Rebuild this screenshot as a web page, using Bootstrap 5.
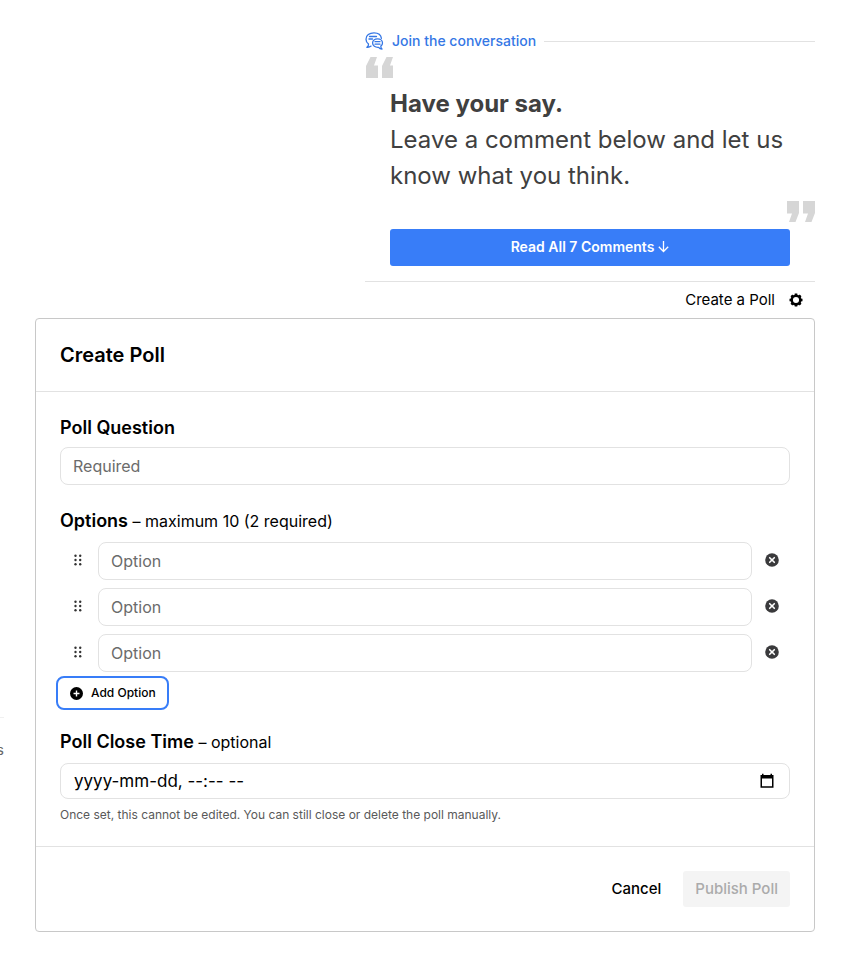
<!DOCTYPE html>
<html lang="en">
<head>
<meta charset="utf-8">
<meta name="viewport" content="width=device-width, initial-scale=1">
<title>Create Poll</title>
<link rel="stylesheet" href="https://cdn.jsdelivr.net/npm/bootstrap@5.3.0/dist/css/bootstrap.min.css">
<style>
body { font-family: Inter, "Liberation Sans", sans-serif; font-size: 16px; line-height: 24px; color: #000; background: #fff; }
svg { display: block; flex: none; }
.edge-col { width: 5px; margin-top: 717px; }
.edge-col p { border-top: 1px solid #f0f0f0; padding-top: 20px; margin-right: 1px; font-size: 14px; color: #666; }
.page-main { padding: 32px 31px 24px 30px; min-width: 0; }
.talk { width: 450px; max-width: 100%; }
.talk-link { font-size: 14px; line-height: 18px; font-weight: 500; color: #3577e5; }
.talk-rule { height: 1px; background: #e2e2e2; }
.talk-body { padding: 8px 25px 7px; font-size: 24px; line-height: 36px; color: #404040; }
.quote-mark { fill: #d6d6d6; }
.quote-open { margin-top: 7px; }
.btn-read { margin: 7px 25px 15px; padding: 7px 8px 9px; border: 0; border-radius: 3px; font-size: 14px; line-height: 21px; font-weight: 600; background: #387df8; color: #fff; }
.btn-read:hover { background: #2468e0; color: #fff; }
.poll-bar { border-top: 1px solid #e2e2e2; padding: 6px 12px 6px 0; }
.poll-bar .btn { font-size: 15px; line-height: 24px; gap: 14px; }
.btn:not(.btn-read) { color: #000; }
.poll-card { border: 1px solid #c8c8c8; border-radius: 4px; color: #000; }
.poll-head { padding: 24px; border-bottom: 1px solid #e2e2e2; }
.poll-head h1 { font-size: 20px; line-height: 24px; font-weight: 600; }
.poll-main { padding: 24px 24px 19px; }
.poll-label { font-size: 18px; line-height: 24px; font-weight: 600; margin: 0 0 9px; float: none; }
.poll-label.label-tight { margin-bottom: 7px; }
.poll-label span { font-size: 16px; font-weight: 400; }
.poll-input { height: 38px; padding: 6px 12px; border: 1px solid #e2e2e2; border-radius: 8px; font-size: 16px; line-height: 24px; color: #000; }
.poll-input::placeholder { color: #6b6b6b; }
.option-row { display: grid; grid-template-columns: 36px 1fr 36px; gap: 2px; margin-bottom: 8px; }
.option-row .btn { padding: 0 0 3px; border: 0; display: flex; align-items: center; justify-content: center; }
.btn-add { margin: -4px 0 20px -4px; height: 34px; padding: 0 11px 0 12px; border: 2px solid #387df8 !important; border-radius: 8px; font-size: 12px; line-height: 18px; font-weight: 500; }
.time-box { height: 36px; border: 1px solid #e2e2e2; border-radius: 8px; padding: 0 14px 0 13px; }
.time-box input { font-size: 17px; line-height: 24px; outline: 0; background: none; }
.time-box input::placeholder { color: #000; opacity: 1; }
.time-note { font-size: 12px; line-height: 18px; color: #595959; margin: 7px 0 3px; }
.poll-foot { border-top: 1px solid #e2e2e2; padding: 24px; gap: 10px; }
.poll-foot .btn { height: 36px; padding: 0 12px; border: 0; border-radius: 3px; font-size: 15px; line-height: 24px; font-weight: 500; }
.poll-foot .btn:disabled { background: #f4f4f4; color: #ababab; opacity: 1; }
</style>
<script src="https://cdn.jsdelivr.net/npm/bootstrap@5.3.0/dist/js/bootstrap.bundle.min.js"></script>
</head>
<body>
<svg width="0" height="0" class="d-none" aria-hidden="true">
  <symbol id="grip" viewBox="0 0 10 14"><g fill="#333"><circle cx="2.5" cy="2.800" r="1.2"/><circle cx="7.2" cy="2.800" r="1.2"/><circle cx="2.5" cy="7" r="1.2"/><circle cx="7.2" cy="7" r="1.2"/><circle cx="2.5" cy="11.200" r="1.2"/><circle cx="7.2" cy="11.200" r="1.2"/></g></symbol>
  <symbol id="cross" viewBox="0 0 14 14"><circle cx="7" cy="7" r="6.8" fill="#3a3a3c"/><path d="M4.7 4.7 9.3 9.3M9.3 4.7 4.7 9.3" stroke="#fff" stroke-width="1.6" stroke-linecap="round"/></symbol>
</svg>
<div class="d-flex align-items-start">
  <aside class="edge-col flex-shrink-0 overflow-hidden"><p class="mb-0 d-flex justify-content-end">s</p></aside>
  <main class="page-main flex-grow-1">
    <section class="talk ms-auto d-flex flex-column">
      <div class="d-flex align-items-center">
        <a href="#comments" class="talk-link d-flex align-items-center text-decoration-none gap-2 me-2">
          <svg width="19" height="18" viewBox="0 0 19 18" fill="none" stroke="#3577e5" stroke-width="1.300" stroke-linejoin="round" stroke-linecap="round" aria-hidden="true">
            <path d="M16.4 6.4C16 3 13 .9 9 .9 4.400.9 1 3.300 1 7.200c0 2 1 3.700 2.500 4.900.2 1.300-.5 2.400-1.600 3.200 1.700.2 3-.2 4.200-1.200"/>
            <path d="M12.500 6.800c2.800 0 5 1.700 5 4.100 0 1.500-.7 2.500-1.700 3.200-.1 1.200.3 2 1.200 2.900-1.400 0-2.600-.6-3.400-1.700-3.400.3-6-1.500-6-4.300 0-2.500 2.100-4.200 4.900-4.200Z"/>
            <path d="M4.500 4.500h7M4 7h3.500M10 9.700h5M10 12.200h5"/>
          </svg>
          <span>Join the conversation</span>
        </a>
        <div class="talk-rule flex-grow-1"></div>
      </div>
      <svg class="quote-mark quote-open" width="28" height="21" viewBox="0 0 28 21" aria-hidden="true"><path d="M1 21V9L5.500 0H12L9 8.500h4V21ZM17 21V9l4.500-9H28l-3 8.500h3V21Z"/></svg>
      <p class="talk-body mb-0"><strong class="d-block">Have your say.</strong>Leave a comment below and let us know what you think.</p>
      <svg class="quote-mark align-self-end" width="28" height="21" viewBox="0 0 28 21" aria-hidden="true"><path d="M12 0v12L8.500 21H2l3-8.500H0V0ZM28 0v12l-3.500 9H18l3-8.500h-5V0Z"/></svg>
      <button type="button" class="btn btn-read d-flex justify-content-center align-items-center gap-1">Read All 7 Comments
        <svg width="11" height="12" viewBox="0 0 11 12" fill="none" stroke="#fff" stroke-width="1.300" aria-hidden="true"><path d="M5.500 0v10M.8 5.800l4.700 4.700 4.700-4.700"/></svg>
      </button>
      <div class="poll-bar d-flex justify-content-end align-items-center">
        <button type="button" class="btn border-0 p-0 d-flex align-items-center">Create a Poll
          <svg width="14" height="14" viewBox="0 0 14 14" aria-hidden="true"><g fill="none" stroke="#000"><circle cx="7" cy="7" r="4.300" stroke-width="2.500"/><path stroke-width="2.600" d="M7 .5v2M7 11.500v2M.5 7h2M11.500 7h2M2.400 2.400l1.400 1.400M10.200 10.200l1.400 1.400M11.600 2.400l-1.400 1.400M3.800 10.200l-1.400 1.400"/></g></svg>
        </button>
      </div>
    </section>
    <form class="poll-card">
      <header class="poll-head"><h1 class="mb-0">Create Poll</h1></header>
      <div class="poll-main">
        <label class="poll-label label-tight d-block" for="question">Poll Question</label>
        <input class="form-control poll-input mb-4" id="question" type="text" placeholder="Required">
        <fieldset>
          <legend class="poll-label">Options <span>– maximum 10 (2 required)</span></legend>
          <div class="option-row">
            <button type="button" class="btn" aria-label="Move option 1"><svg width="10" height="14"><use href="#grip"/></svg></button>
            <input class="form-control poll-input" type="text" placeholder="Option" aria-label="Option 1">
            <button type="button" class="btn" aria-label="Remove option 1"><svg width="14" height="14"><use href="#cross"/></svg></button>
          </div>
          <div class="option-row">
            <button type="button" class="btn" aria-label="Move option 2"><svg width="10" height="14"><use href="#grip"/></svg></button>
            <input class="form-control poll-input" type="text" placeholder="Option" aria-label="Option 2">
            <button type="button" class="btn" aria-label="Remove option 2"><svg width="14" height="14"><use href="#cross"/></svg></button>
          </div>
          <div class="option-row">
            <button type="button" class="btn" aria-label="Move option 3"><svg width="10" height="14"><use href="#grip"/></svg></button>
            <input class="form-control poll-input" type="text" placeholder="Option" aria-label="Option 3">
            <button type="button" class="btn" aria-label="Remove option 3"><svg width="14" height="14"><use href="#cross"/></svg></button>
          </div>
          <button type="button" class="btn btn-add d-flex align-items-center gap-2">
            <svg width="13" height="13" viewBox="0 0 14 14" aria-hidden="true"><circle cx="7" cy="7" r="7"/><path d="M7 3.800v6.400M3.800 7h6.400" stroke="#fff" stroke-width="1.500"/></svg>Add Option
          </button>
        </fieldset>
        <label class="poll-label d-block" for="close-time">Poll Close Time <span>– optional</span></label>
        <div class="time-box d-flex align-items-center">
          <input class="border-0 p-0 flex-grow-1" id="close-time" type="text" placeholder="yyyy-mm-dd, --:-- --">
          <button type="button" class="btn border-0 p-0" aria-label="Choose date">
            <svg width="16" height="16" viewBox="0 0 16 16" aria-hidden="true"><path fill-rule="evenodd" d="M3 .8h1.500V2h7V.8H13V2h1.500v12.700h-13V2H3ZM3 5.500v7.800h10V5.500Z"/></svg>
          </button>
        </div>
        <p class="time-note">Once set, this cannot be edited. You can still close or delete the poll manually.</p>
      </div>
      <footer class="poll-foot d-flex justify-content-end">
        <button type="button" class="btn">Cancel</button>
        <button type="submit" class="btn" disabled>Publish Poll</button>
      </footer>
    </form>
  </main>
</div>
</body>
</html>
